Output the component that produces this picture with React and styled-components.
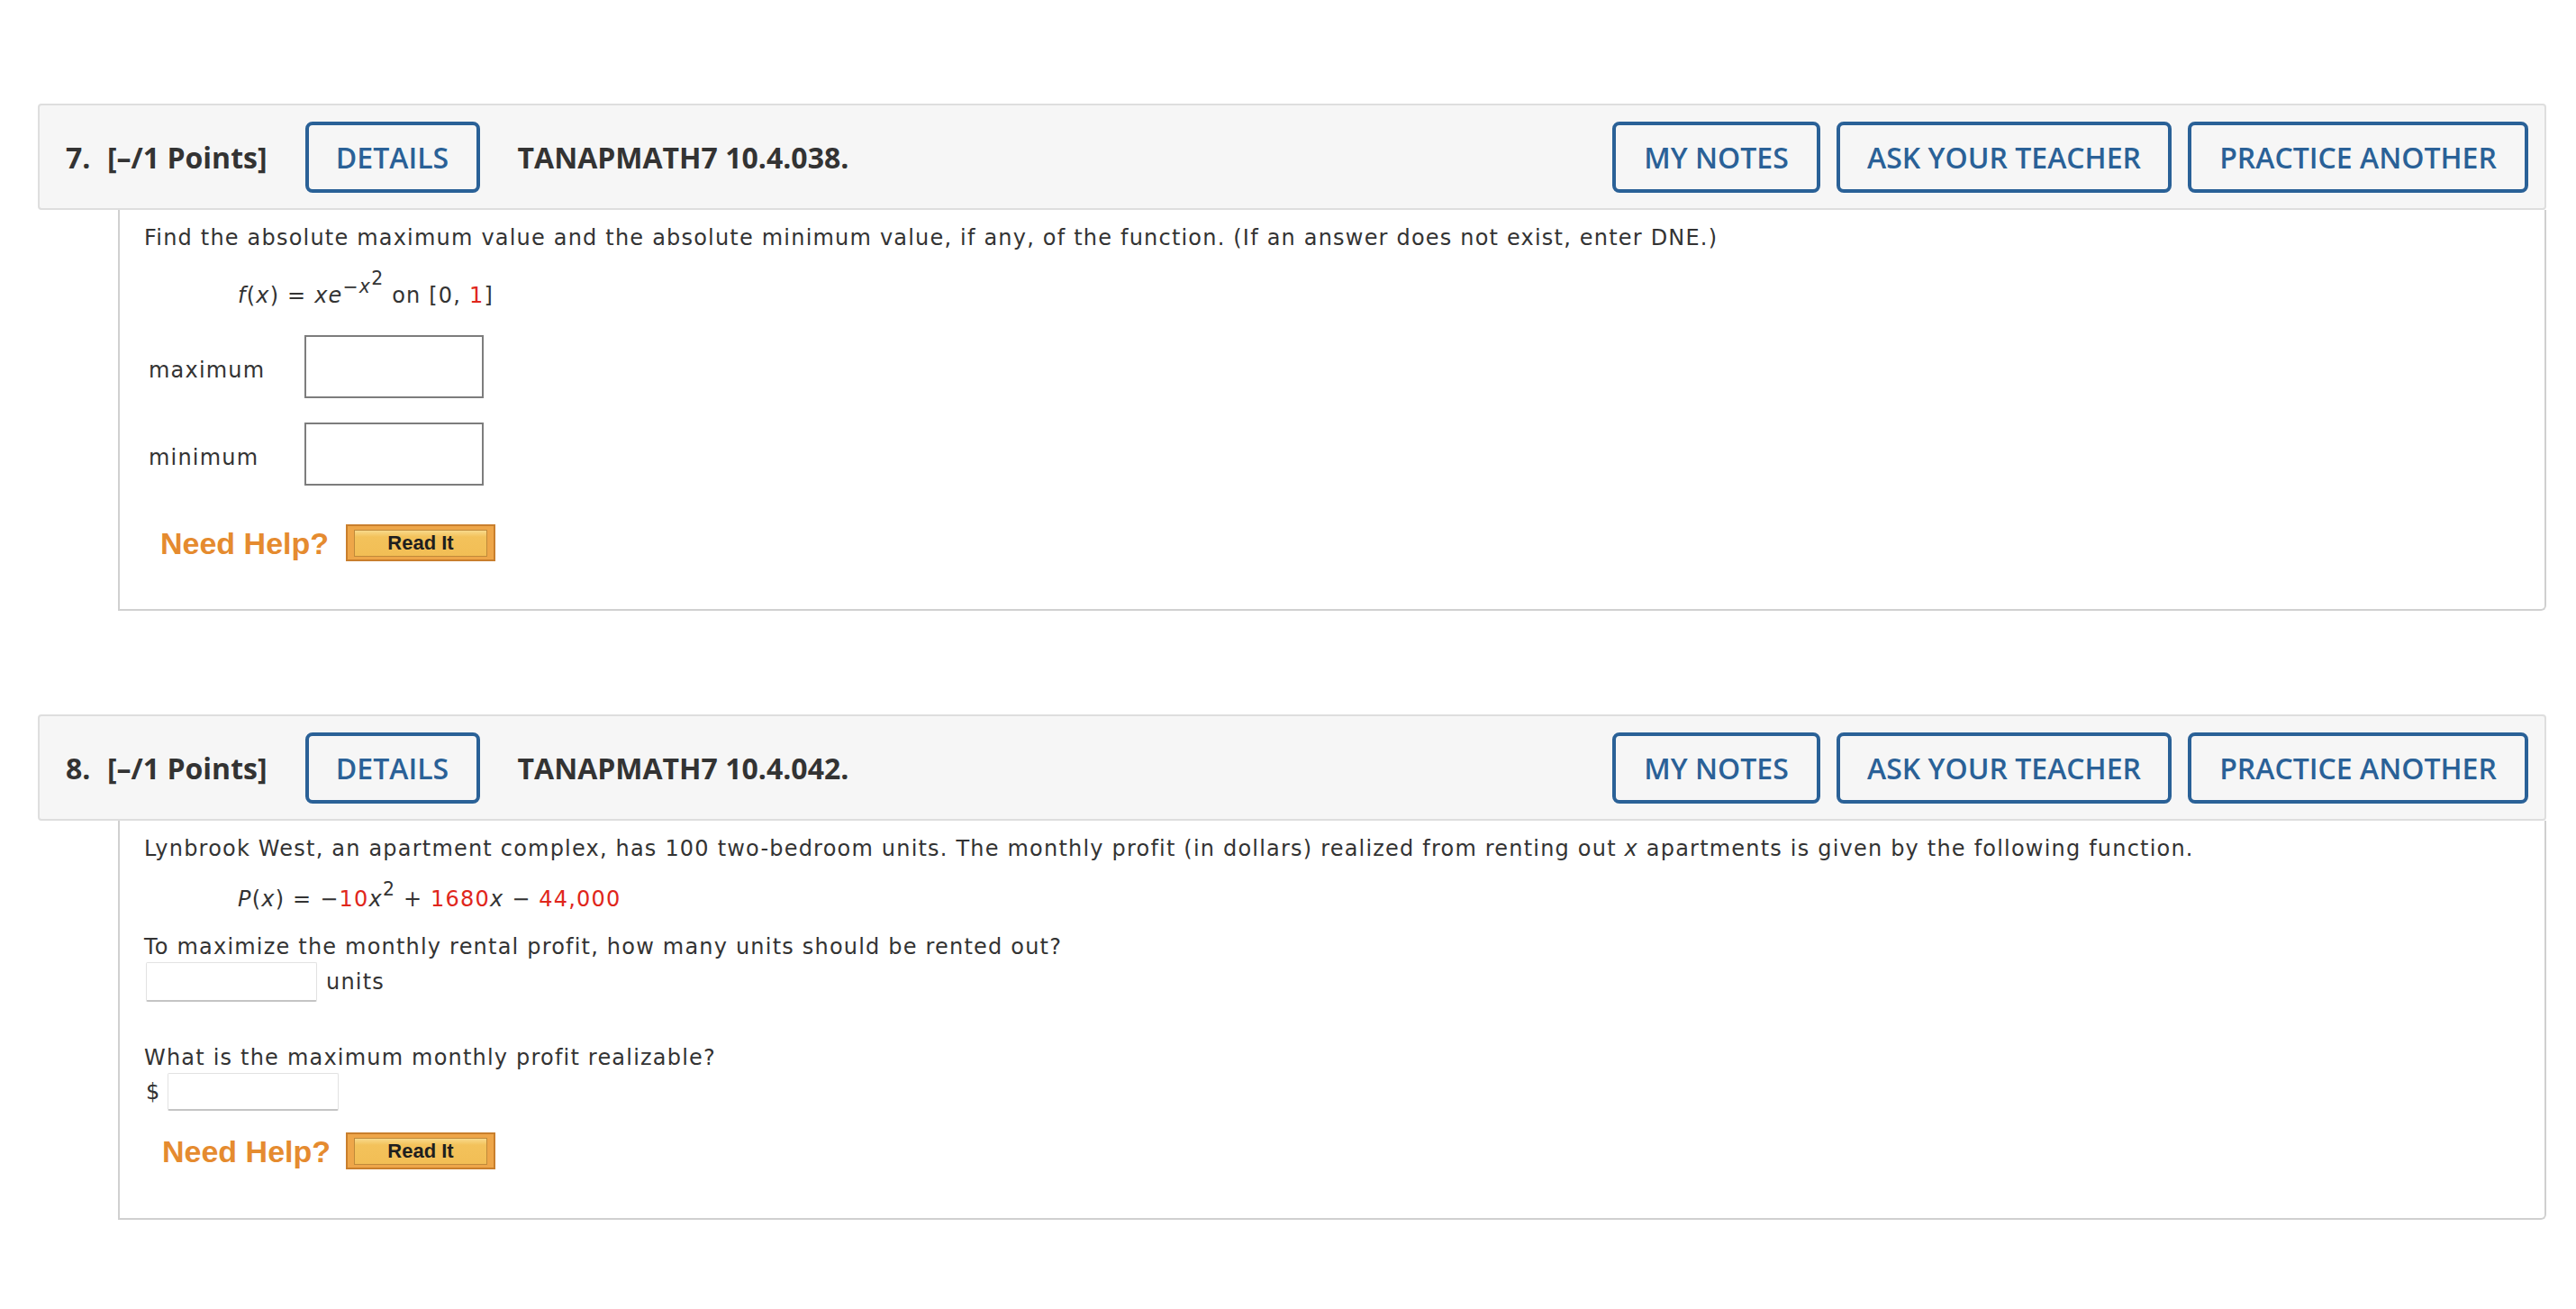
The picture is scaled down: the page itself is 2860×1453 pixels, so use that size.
import React from 'react';
import styled, { createGlobalStyle } from 'styled-components';

const GlobalStyle = createGlobalStyle`
  body {
    margin: 0;
    background: #fff;
    font-family: "DejaVu Sans", Verdana, sans-serif;
    color: #333;
  }
`;

const Page = styled.div`
  padding: 115px 33px 40px 42px;
`;

const Question = styled.section`
  margin-bottom: 115px;

  &:last-child {
    margin-bottom: 0;
  }
`;

const Header = styled.div`
  display: flex;
  align-items: center;
  height: 118px;
  box-sizing: border-box;
  padding: 0 18px 0 29px;
  background: #f6f6f6;
  border: 2px solid #dedede;
  border-radius: 4px;
  font-family: "Open Sans", sans-serif;
  color: #333;
`;

const Number = styled.span`
  font-size: 32px;
  font-weight: 700;
  width: 46px;
`;

const Points = styled.span`
  font-size: 32px;
  font-weight: 700;
  margin-right: 42px;
`;

const Title = styled.span`
  font-size: 32px;
  font-weight: 700;
  margin-left: 42px;
  flex: 1;
`;

const HeadButton = styled.button`
  display: flex;
  align-items: center;
  justify-content: center;
  box-sizing: border-box;
  width: ${p => p.$w}px;
  height: 79px;
  padding: 0;
  background: transparent;
  border: 4px solid #2a6197;
  border-radius: 8px;
  font-family: "Open Sans", sans-serif;
  font-size: 32px;
  font-weight: 600;
  color: #2a6197;
  cursor: pointer;
`;

const RightButtons = styled.div`
  display: flex;
  gap: 18px;
`;

const Panel = styled.div`
  margin-left: 89px;
  border: 2px solid #d0d0d0;
  border-top: none;
  border-radius: 0 0 6px 0;
  padding: ${p => p.$top}px 27px ${p => p.$bottom}px 27px;
  font-size: 24px;
  line-height: 30px;
  letter-spacing: 1.2px;
  color: #333;
`;

const Text = styled.div`
  margin-top: ${p => p.$mt || 0}px;
  white-space: nowrap;
`;

const Formula = styled.div`
  margin-top: ${p => p.$mt}px;
  padding-left: 104px;
  white-space: nowrap;
`;

const Sup = styled.span`
  position: relative;
  top: ${p => p.$top};
  font-size: ${p => p.$size || '0.85em'};
  line-height: 0;
  vertical-align: baseline;
`;

const Red = styled.span`
  color: #e0261b;
`;

const AnswerRow = styled.div`
  display: flex;
  align-items: flex-start;
  margin-top: ${p => p.$mt}px;
  padding-left: 5px;
`;

const AnswerLabel = styled.span`
  width: 173px;
  margin-top: 24px;
`;

const BoxInput = styled.input`
  box-sizing: border-box;
  width: 199px;
  height: 70px;
  border: 2px solid #7d7d7d;
  background: #fff;
  margin: 0;
`;

const InlineRow = styled.div`
  display: flex;
  align-items: center;
  gap: ${p => p.$gap}px;
  margin-top: ${p => p.$mt}px;
  padding-left: 2px;
`;

const LineInput = styled.input`
  box-sizing: border-box;
  width: 190px;
  height: ${p => p.$h}px;
  margin: 0;
  border: 1px solid #e2e2e2;
  border-bottom: 2px solid #c4c4c4;
  border-radius: 2px;
  background: #fff;
`;

const HelpRow = styled.div`
  display: flex;
  align-items: center;
  height: 41px;
  margin-top: ${p => p.$mt}px;
  padding-left: ${p => p.$pl}px;
  letter-spacing: 0;
`;

const NeedHelp = styled.span`
  font-family: "Liberation Sans", Arial, sans-serif;
  font-size: 34px;
  font-weight: 700;
  color: #e58b2f;
  width: ${p => 224 - p.$pl}px;
`;

const ReadIt = styled.button`
  box-sizing: border-box;
  width: 166px;
  height: 41px;
  padding: 4px 7px 3px;
  background: #eea649;
  border: 2px solid #c97f2d;
  cursor: pointer;
  display: flex;
`;

const ReadItFace = styled.span`
  flex: 1;
  display: flex;
  align-items: center;
  justify-content: center;
  border: 1px solid #c08a3a;
  background: linear-gradient(#f8d98a 0%, #f3c25b 25%, #f2be55 100%);
  font-family: "Liberation Sans", Arial, sans-serif;
  font-size: 22px;
  font-weight: 700;
  color: #1e1e1e;
`;

const QuestionHeader = ({ num, code }) => (
  <Header>
    <Number>{num}.</Number>
    <Points>[–/1 Points]</Points>
    <HeadButton $w={194}>DETAILS</HeadButton>
    <Title>{code}</Title>
    <RightButtons>
      <HeadButton $w={231}>MY NOTES</HeadButton>
      <HeadButton $w={372}>ASK YOUR TEACHER</HeadButton>
      <HeadButton $w={378}>PRACTICE ANOTHER</HeadButton>
    </RightButtons>
  </Header>
);

const Help = ({ mt, pl }) => (
  <HelpRow $mt={mt} $pl={pl}>
    <NeedHelp $pl={pl}>Need Help?</NeedHelp>
    <ReadIt>
      <ReadItFace>Read It</ReadItFace>
    </ReadIt>
  </HelpRow>
);

export default function App() {
  return (
    <Page>
      <GlobalStyle />
      <Question>
        <QuestionHeader num="7" code="TANAPMATH7 10.4.038." />
        <Panel $top={16} $bottom={53}>
          <Text>
            Find the absolute maximum value and the absolute minimum value, if any, of the function. (If an answer does not exist, enter DNE.)
          </Text>
          <Formula $mt={34}>
            <i>f</i>(<i>x</i>) = <i>xe</i>
            <Sup $top="-0.55em">
              −<i>x</i>
              <Sup $top="-0.45em" $size="1em">2</Sup>
            </Sup>
            {' '}on [0, <Red>1</Red>]
          </Formula>
          <AnswerRow $mt={29}>
            <AnswerLabel>maximum</AnswerLabel>
            <BoxInput type="text" />
          </AnswerRow>
          <AnswerRow $mt={27}>
            <AnswerLabel>minimum</AnswerLabel>
            <BoxInput type="text" />
          </AnswerRow>
          <Help mt={43} pl={18} />
        </Panel>
      </Question>
      <Question>
        <QuestionHeader num="8" code="TANAPMATH7 10.4.042." />
        <Panel $top={16} $bottom={54}>
          <Text>
            Lynbrook West, an apartment complex, has 100 two-bedroom units. The monthly profit (in dollars) realized from renting out <i>x</i> apartments is given by the following function.
          </Text>
          <Formula $mt={26}>
            <i>P</i>(<i>x</i>) = −<Red>10</Red><i>x</i>
            <Sup $top="-0.6em">2</Sup> + <Red>1680</Red><i>x</i> − <Red>44,000</Red>
          </Formula>
          <Text $mt={23}>To maximize the monthly rental profit, how many units should be rented out?</Text>
          <InlineRow $mt={2} $gap={10}>
            <LineInput $h={44} type="text" />
            <span>units</span>
          </InlineRow>
          <Text $mt={47}>What is the maximum monthly profit realizable?</Text>
          <InlineRow $mt={2} $gap={8}>
            <span>$</span>
            <LineInput $h={42} type="text" />
          </InlineRow>
          <Help mt={24} pl={20} />
        </Panel>
      </Question>
    </Page>
  );
}
